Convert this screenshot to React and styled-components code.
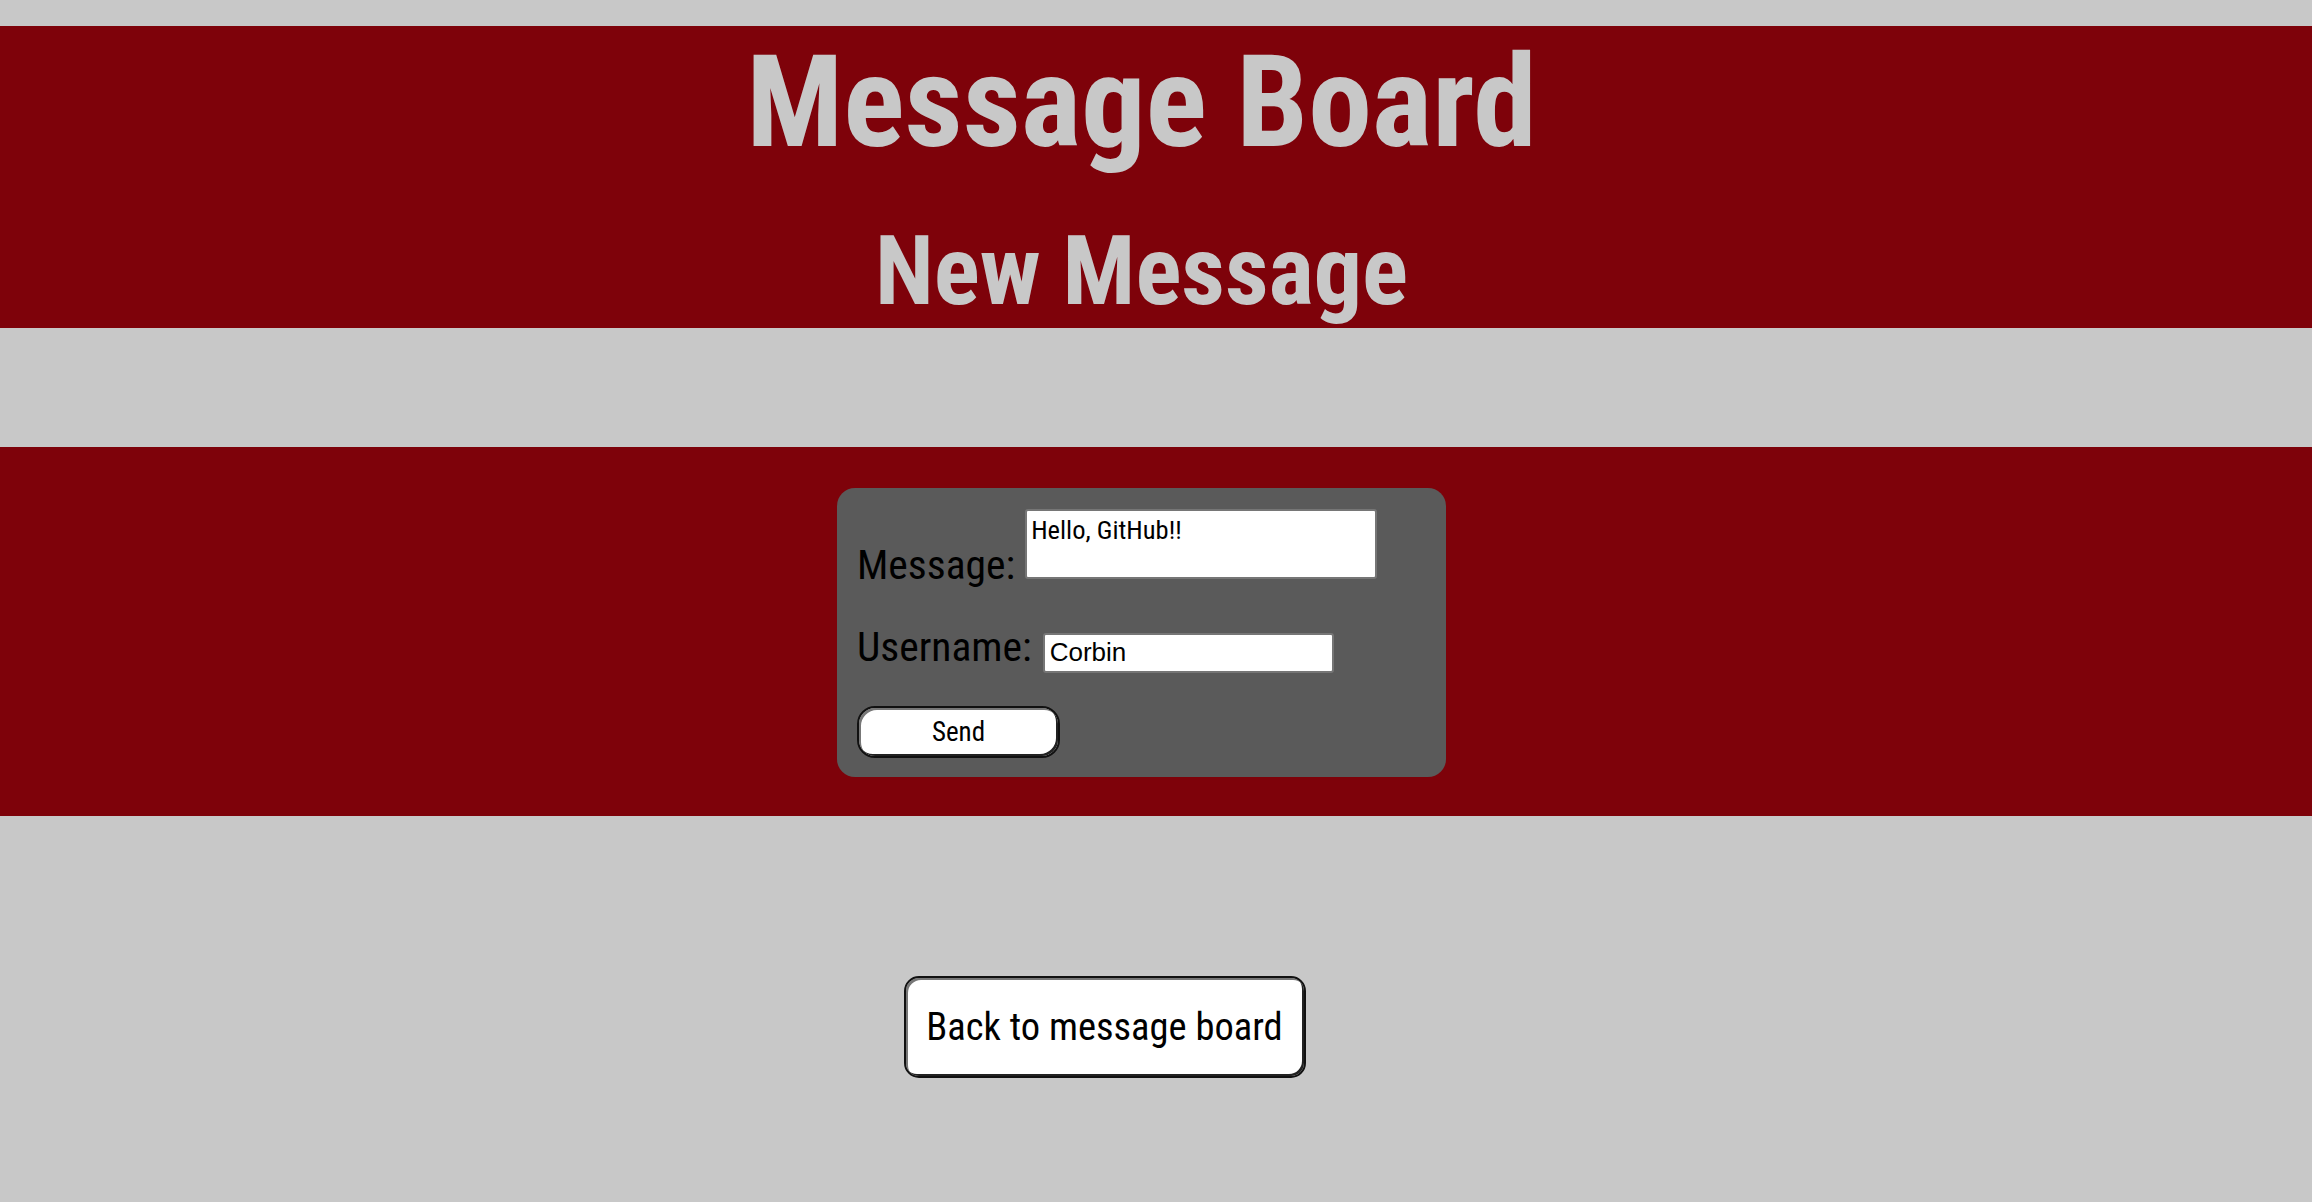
import React, { useState } from "react";
import styled, { createGlobalStyle } from "styled-components";

const GlobalStyle = createGlobalStyle`
  html, body {
    margin: 0;
    padding: 0;
    background-color: #c8c8c8;
  }
  body {
    font-family: "Roboto Condensed", Roboto, "Liberation Sans", sans-serif;
    font-stretch: condensed;
  }
`;

const Page = styled.div`
  display: flex;
  flex-direction: column;
  min-height: 1202px;
  padding-top: 26px;
  box-sizing: border-box;
`;

const Header = styled.header`
  display: flex;
  flex-direction: column;
  align-items: center;
  background-color: #7e020a;
  padding: 12px 29px 9px 0;
`;

const Title = styled.h1`
  margin: 0;
  font-size: 128px;
  line-height: 1;
  font-weight: 700;
  color: #c8c8c8;
`;

const SubTitle = styled.h2`
  margin: 57px 0 0;
  font-size: 96px;
  line-height: 1;
  font-weight: 700;
  color: #c8c8c8;
`;

const FormBand = styled.section`
  display: flex;
  justify-content: center;
  margin-top: 119px;
  background-color: #7e020a;
  padding: 41px 29px 39px 0;
`;

const Card = styled.form`
  display: flex;
  flex-direction: column;
  align-items: flex-start;
  gap: 33px;
  width: 609px;
  box-sizing: border-box;
  padding: 21px 20px 19px;
  background-color: #5a5a5a;
  border-radius: 18px;
`;

const Row = styled.div`
  font-size: 41.5px;
  color: #000;
`;

const TextArea = styled.textarea`
  vertical-align: baseline;
  margin: 0 0 0 10px;
  width: 352px;
  height: 70px;
  box-sizing: border-box;
  padding: 3px 4px;
  border: 2px solid #767676;
  border-radius: 3px;
  font-family: "Roboto Condensed", Roboto, sans-serif;
  font-stretch: condensed;
  font-size: 26.5px;
  color: #000;
  background: #fff;
  resize: none;
`;

const TextInput = styled.input`
  vertical-align: baseline;
  margin: 0 0 0 11px;
  width: 291px;
  height: 40px;
  box-sizing: border-box;
  padding: 0 5px;
  border: 2px solid #767676;
  border-radius: 3px;
  font-family: "Liberation Sans", Arial, sans-serif;
  font-size: 26px;
  color: #000;
  background: #fff;
`;

const Button = styled.button`
  display: inline-flex;
  align-items: center;
  justify-content: center;
  box-sizing: border-box;
  width: ${(p) => p.$w}px;
  height: ${(p) => p.$h}px;
  padding: 0;
  border: 2px solid #111;
  border-radius: ${(p) => p.$r}px;
  box-shadow: inset 2px 2px 0 #777, inset -2px -2px 0 #222;
  background-color: #fff;
  color: #000;
  font-family: "Roboto Condensed", Roboto, sans-serif;
  font-stretch: condensed;
  font-size: ${(p) => p.$size}px;
  cursor: pointer;
`;

const BackRow = styled.div`
  display: flex;
  justify-content: center;
  margin-top: 160px;
  padding-right: 103px;
`;

function App() {
  const [message, setMessage] = useState("Hello, GitHub!!");
  const [username, setUsername] = useState("Corbin");

  return (
    <>
      <GlobalStyle />
      <Page>
        <Header>
          <Title>Message Board</Title>
          <SubTitle>New Message</SubTitle>
        </Header>
        <FormBand>
          <Card onSubmit={(e) => e.preventDefault()}>
            <Row>
              <label htmlFor="message">Message:</label>
              <TextArea
                id="message"
                value={message}
                onChange={(e) => setMessage(e.target.value)}
              />
            </Row>
            <Row>
              <label htmlFor="username">Username:</label>
              <TextInput
                id="username"
                type="text"
                value={username}
                onChange={(e) => setUsername(e.target.value)}
              />
            </Row>
            <Button type="submit" $w={203} $h={52} $r={18} $size={27}>
              Send
            </Button>
          </Card>
        </FormBand>
        <BackRow>
          <Button type="button" $w={402} $h={102} $r={15} $size={38.5}>
            Back to message board
          </Button>
        </BackRow>
      </Page>
    </>
  );
}

export default App;
